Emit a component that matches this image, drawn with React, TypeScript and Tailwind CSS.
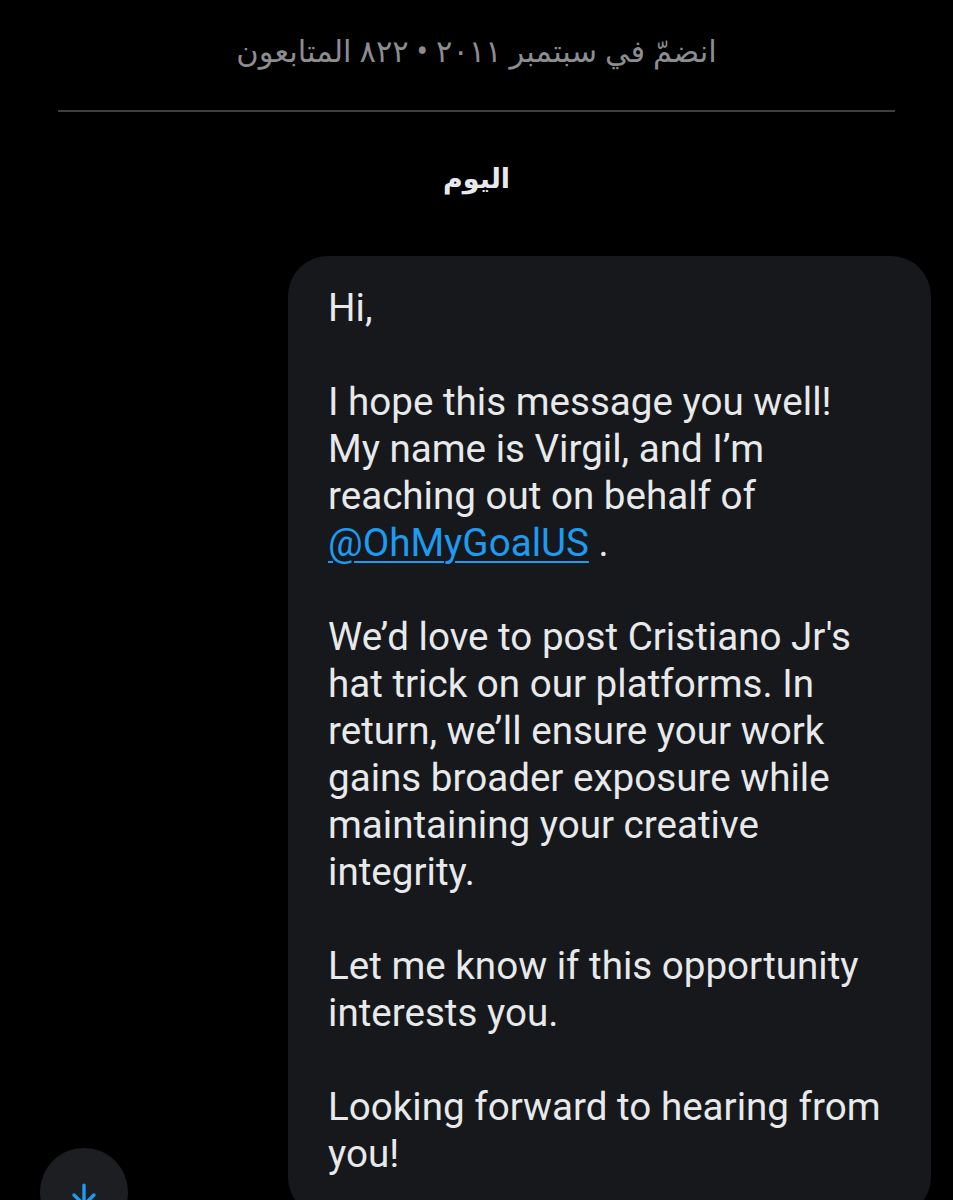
import { ArrowDown } from "lucide-react";

const paragraphs: string[][] = [
  ["Hi,"],
  ["I hope this message you well!", "My name is Virgil, and I’m", "reaching out on behalf of", "@@"],
  ["We’d love to post Cristiano Jr's", "hat trick on our platforms. In", "return, we’ll ensure your work", "gains broader exposure while", "maintaining your creative", "integrity."],
  ["Let me know if this opportunity", "interests you."],
  ["Looking forward to hearing from", "you!"],
];

function Line({ text }: { text: string }) {
  if (text === "@@") {
    return (
      <div className="whitespace-nowrap">
        <span className="text-[#1d9bf0] underline decoration-[2px] underline-offset-[5px]">@OhMyGoalUS</span> .
      </div>
    );
  }
  return <div className="whitespace-nowrap">{text}</div>;
}

export default function App() {
  return (
    <div className="relative h-[1200px] w-[953px] overflow-hidden bg-black">
      <div
        dir="rtl"
        className="pt-[27px] text-center text-[30.5px] leading-[46px] text-[#8b8d91]"
        style={{ fontFamily: '"Noto Sans", "DejaVu Sans", sans-serif' }}
      >
        انضمّ في سبتمبر ٢٠١١ • ٨٢٢ المتابعون
      </div>

      <div className="mx-[58px] mt-[37px] h-[2px] bg-[#3d3f42]" />

      <div
        dir="rtl"
        className="mt-[48px] text-center text-[27px] font-bold leading-[36px] text-[#e7e9ea]"
        style={{ fontFamily: '"Noto Sans", "DejaVu Sans", sans-serif' }}
      >
        اليوم
      </div>

      <div className="ml-[288px] mt-[60px] w-[643px] rounded-[40px] bg-[#16181c] px-[40px] pb-[40px] pt-[28px] font-['Roboto',sans-serif] text-[38.6px] leading-[47px] text-[#e7e9ea]">
        {paragraphs.map((p, i) => (
          <div key={i} className={i > 0 ? "mt-[47px]" : ""}>
            {p.map((t, j) => (
              <Line key={j} text={t} />
            ))}
          </div>
        ))}
      </div>

      <div className="absolute left-[40px] top-[1148px] flex h-[88px] w-[88px] justify-center rounded-full bg-[#1c1e21] pt-[30px]">
        <ArrowDown size={34} strokeWidth={2.4} className="text-[#1d9bf0]" />
      </div>
    </div>
  );
}
